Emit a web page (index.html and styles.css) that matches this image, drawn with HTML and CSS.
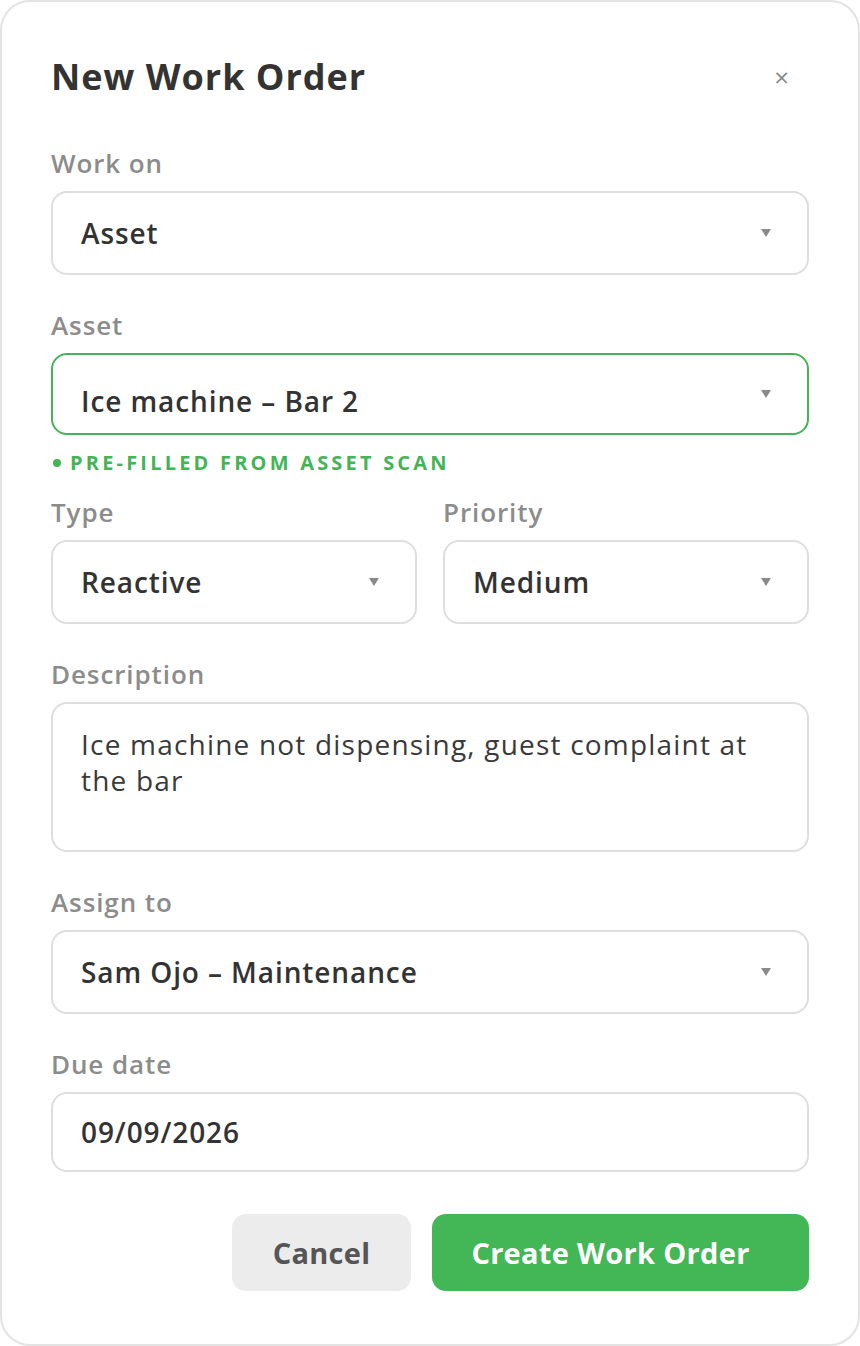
FILE: index.html
```html
<!DOCTYPE html>
<html lang="en">
<head>
<meta charset="utf-8">
<title>New Work Order</title>
<link rel="stylesheet" href="styles.css">
</head>
<body>
<div class="modal">
  <div class="modal-head">
    <h1 class="modal-title">New Work Order</h1>
    <span class="close">×</span>
  </div>

  <div class="field">
    <div class="label">Work on</div>
    <div class="control select"><span>Asset</span><i class="caret"></i></div>
  </div>

  <div class="field field-hinted">
    <div class="label">Asset</div>
    <div class="control select is-filled"><span>Ice machine – Bar 2</span><i class="caret"></i></div>
    <div class="hint"><span class="dot"></span>PRE-FILLED FROM ASSET SCAN</div>
  </div>

  <div class="row">
    <div class="field">
      <div class="label">Type</div>
      <div class="control select"><span>Reactive</span><i class="caret"></i></div>
    </div>
    <div class="field">
      <div class="label">Priority</div>
      <div class="control select"><span>Medium</span><i class="caret"></i></div>
    </div>
  </div>

  <div class="field">
    <div class="label">Description</div>
    <div class="control textarea">Ice machine not dispensing, guest complaint at the bar</div>
  </div>

  <div class="field">
    <div class="label">Assign to</div>
    <div class="control select"><span>Sam Ojo – Maintenance</span><i class="caret"></i></div>
  </div>

  <div class="field">
    <div class="label">Due date</div>
    <div class="control date"><span>09/09/2026</span></div>
  </div>

  <div class="actions">
    <button class="btn btn-cancel">Cancel</button>
    <button class="btn btn-primary">Create Work Order</button>
  </div>
</div>
</body>
</html>
```

FILE: styles.css
```css
* { box-sizing: border-box; }

html, body {
  margin: 0;
  padding: 0;
  background: #ffffff;
}

body {
  font-family: "Open Sans", "Liberation Sans", sans-serif;
  color: #333333;
}

.modal {
  width: 860px;
  height: 1346px;
  border: 2px solid #e3e3e3;
  border-radius: 30px;
  padding: 45px 49px 0 49px;
  background: #fff;
}

.modal-head {
  display: flex;
  align-items: center;
  justify-content: space-between;
  height: 60px;
  margin-bottom: 41px;
}

.modal-title {
  margin: 0;
  font-size: 36px;
  font-weight: 700;
  letter-spacing: 1px;
  color: #333;
  line-height: 1;
}

.close {
  font-size: 26px;
  color: #8a8a8a;
  margin-right: 20px;
  line-height: 1;
}

.field {
  display: flex;
  flex-direction: column;
  margin-bottom: 35px;
}

.field-hinted {
  margin-bottom: 22px;
}

.label {
  font-size: 26px;
  font-weight: 600;
  letter-spacing: 0.9px;
  color: #8c8c8c;
  line-height: 30px;
  margin-bottom: 13px;
}

.control {
  height: 84px;
  border: 2px solid #dedede;
  border-radius: 16px;
  padding: 0 36px 0 28px;
  display: flex;
  align-items: center;
  justify-content: space-between;
  font-size: 28px;
  font-weight: 600;
  letter-spacing: 0.9px;
  color: #333;
}

.control.is-filled {
  height: 82px;
  padding-top: 14px;
  border-color: #45b457;
}

.control.is-filled .caret {
  margin-top: -14px;
}

.control.date {
  height: 80px;
}

.caret {
  width: 0;
  height: 0;
  border-left: 5px solid transparent;
  border-right: 5px solid transparent;
  border-top: 8px solid #8a8a8a;
}

.textarea {
  height: 150px;
  align-items: flex-start;
  padding-top: 22px;
  padding-right: 40px;
  font-weight: 400;
  letter-spacing: 1.2px;
  line-height: 36px;
  color: #3a3a3a;
}

.hint {
  margin-top: 16px;
  display: flex;
  align-items: center;
  font-size: 20px;
  font-weight: 700;
  color: #45b457;
  letter-spacing: 3.2px;
  line-height: 24px;
}

.dot {
  width: 8px;
  height: 8px;
  border-radius: 50%;
  background: #45b457;
  margin: 0 9px 0 2px;
}

.row {
  display: grid;
  grid-template-columns: 1fr 1fr;
  column-gap: 26px;
}

/* sibling margins collapse, so this sets the full gap below the last field */
.actions {
  display: flex;
  justify-content: flex-end;
  gap: 21px;
  margin-top: 42px;
}

.btn {
  height: 77px;
  border: none;
  border-radius: 14px;
  font-family: inherit;
  font-size: 29px;
  font-weight: 700;
  letter-spacing: 0.3px;
  padding: 0;
}

.btn-cancel {
  width: 179px;
  background: #ececec;
  color: #555;
}

.btn-primary {
  width: 377px;
  padding-right: 20px;
  background: #43b655;
  color: #fff;
}
```
